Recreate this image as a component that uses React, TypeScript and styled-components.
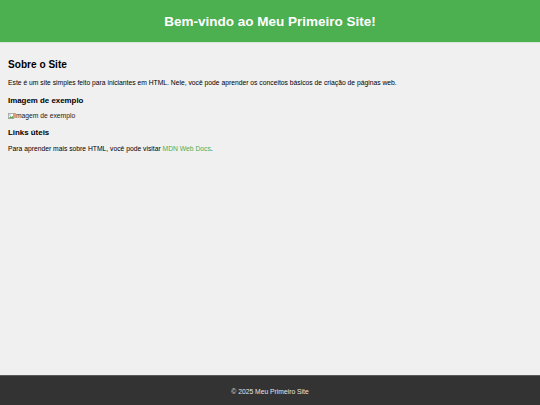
import React from 'react';
import styled, { createGlobalStyle } from 'styled-components';

const GlobalStyle = createGlobalStyle`
  html, body {
    margin: 0;
    padding: 0;
    height: 100%;
    background: #f0f0f0;
    font-family: "Liberation Sans", Arial, sans-serif;
    color: #000;
  }
  #root {
    min-height: 100%;
  }
`;

const Page = styled.div`
  min-height: 405px;
  display: flex;
  flex-direction: column;
`;

const Header = styled.header`
  background: #4caf50;
  height: 42px;
  display: flex;
  align-items: center;
  justify-content: center;
  box-shadow: 0 1px 0 #d8e8d8;
`;

const Title = styled.h1`
  margin: 0;
  padding-top: 1px;
  color: #fff;
  font-size: 13.5px;
  line-height: 16px;
  font-weight: bold;
`;

const Main = styled.main`
  flex: 1;
  padding: 0 8px;
`;

const SectionTitle = styled.h2`
  margin: 17px 0 0;
  font-size: 10.1px;
  line-height: 12px;
  font-weight: bold;
`;

const SubTitle = styled.h3<{ $top: number }>`
  margin: ${p => p.$top}px 0 0;
  font-size: 7.9px;
  line-height: 9px;
  font-weight: bold;
`;

const Text = styled.p<{ $top: number }>`
  margin: ${p => p.$top}px 0 0;
  font-size: 6.75px;
  line-height: 8px;
`;

const BrokenImage = styled.div`
  margin-top: 7.5px;
  display: flex;
  align-items: center;
  font-size: 6.75px;
  line-height: 8px;
  color: #222;
`;

const Link = styled.a`
  color: #4caf50;
  text-decoration: none;
`;

const Footer = styled.footer`
  height: 30px;
  background: #333;
  border-top: 1px solid #5a5a5a;
  box-sizing: border-box;
  display: flex;
  align-items: center;
  justify-content: center;
  padding-top: 1px;
  color: #e6e6e6;
  font-size: 6.75px;
`;

const BrokenIcon = () => (
  <svg width="6" height="6" viewBox="0 0 8 8">
    <rect x="0.5" y="0.5" width="7" height="7" fill="#fff" stroke="#9a9a9a" />
    <path d="M1 7 L3.5 4 L5 5.5 L7 3 L7 7 Z" fill="#5aa55a" />
    <circle cx="2.5" cy="2.5" r="0.9" fill="#6b9fd8" />
  </svg>
);

export default function App() {
  return (
    <>
      <GlobalStyle />
      <Page>
        <Header>
          <Title>Bem-vindo ao Meu Primeiro Site!</Title>
        </Header>
        <Main>
          <SectionTitle>Sobre o Site</SectionTitle>
          <Text $top={8}>
            Este é um site simples feito para iniciantes em HTML. Nele, você pode aprender os conceitos básicos de criação de páginas web.
          </Text>
          <SubTitle $top={8.5}>Imagem de exemplo</SubTitle>
          <BrokenImage>
            <BrokenIcon />
            Imagem de exemplo
          </BrokenImage>
          <SubTitle $top={7.5}>Links úteis</SubTitle>
          <Text $top={8.5}>
            Para aprender mais sobre HTML, você pode visitar{' '}
            <Link href="#">MDN Web Docs</Link>.
          </Text>
        </Main>
        <Footer>© 2025 Meu Primeiro Site</Footer>
      </Page>
    </>
  );
}
